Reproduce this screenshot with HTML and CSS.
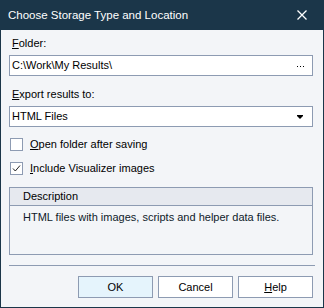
FILE: index.html
```html
<!DOCTYPE html>
<html>
<head>
<meta charset="utf-8">
<link rel="stylesheet" href="styles.css">
</head>
<body>
<div class="window">
  <div class="titlebar">
    <span class="title">Choose Storage Type and Location</span>
    <svg class="close" width="10" height="10" viewBox="0 0 10 10"><path d="M0.5 0.5 L9.5 9.5 M9.5 0.5 L0.5 9.5" stroke="#ffffff" stroke-width="1.3" fill="none"/></svg>
  </div>
  <div class="content">
    <div class="label"><u>F</u>older:</div>
    <div class="field">
      <span class="value">C:\Work\My Results\</span>
      <svg class="dots" width="8" height="2" viewBox="0 0 8 2"><rect x="0" y="0" width="1" height="1" fill="#000"/><rect x="3" y="0" width="1" height="1" fill="#000"/><rect x="6" y="0" width="1" height="1" fill="#000"/></svg>
    </div>
    <div class="label label-gap"><u>E</u>xport results to:</div>
    <div class="field">
      <span class="value">HTML Files</span>
      <svg class="arrow" width="6" height="4" viewBox="0 0 6 4"><path d="M0 0 H6 V1 L3 4 L0 1 Z" fill="#000"/></svg>
    </div>
    <div class="check first">
      <span class="box"></span>
      <span class="ctext"><u>O</u>pen folder after saving</span>
    </div>
    <div class="check">
      <span class="box"><svg width="11" height="11" viewBox="0 0 11 11"><path d="M2 5.5 L4.3 8 L9 2.5" stroke="#222" stroke-width="1" fill="none"/></svg></span>
      <span class="ctext"><u>I</u>nclude Visualizer images</span>
    </div>
    <div class="group">
      <div class="ghead">Description</div>
      <div class="gbody">HTML files with images, scripts and helper data files.</div>
    </div>
    <div class="sep"></div>
    <div class="buttons">
      <div class="btn default">OK</div>
      <div class="btn">Cancel</div>
      <div class="btn"><u>H</u>elp</div>
    </div>
  </div>
</div>
</body>
</html>
```
FILE: styles.css
```css
html, body {
  margin: 0;
  padding: 0;
  background: #f3f5f8;
}
.window {
  width: 324px;
  height: 308px;
  box-sizing: border-box;
  border: 1px solid #1b3649;
  border-top: none;
  background: #f3f5f8;
  font-family: "Liberation Sans", Arial, sans-serif;
  font-size: 11px;
  color: #000;
  display: flex;
  flex-direction: column;
}
.titlebar {
  height: 30px;
  background: #1b3649;
  margin: 0 -1px;
  display: flex;
  align-items: center;
  padding: 0 17px 0 8px;
}
.title {
  color: #ffffff;
  font-size: 11.5px;
  flex: 1;
}
.close {
  display: block;
}
.content {
  padding: 7px 10px 0 8px;
  display: flex;
  flex-direction: column;
}
.label {
  height: 13px;
  line-height: 13px;
  margin-bottom: 5px;
  padding-left: 3px;
}
.label-gap {
  margin-top: 12px;
}
u {
  text-decoration: underline;
  text-underline-offset: 1px;
}
.field {
  height: 21px;
  box-sizing: border-box;
  border: 1px solid #8d9bb2;
  background: #ffffff;
  display: flex;
  align-items: center;
  padding: 0 7px 0 2px;
}
.value {
  flex: 1;
  line-height: 13px;
}
.dots, .arrow {
  display: block;
}
.dots {
  margin-top: 2px;
}
.arrow {
  margin-right: 2px;
}
.check {
  display: flex;
  align-items: center;
  height: 13px;
  margin-top: 11px;
}
.box {
  width: 13px;
  height: 13px;
  box-sizing: border-box;
  border: 1px solid #8d9bb2;
  background: #ffffff;
  margin-left: 1px;
  margin-right: 7px;
  display: flex;
  align-items: center;
  justify-content: center;
}
.box svg {
  display: block;
}
.ctext {
  line-height: 13px;
}
.group {
  margin-top: 12px;
  height: 68px;
  box-sizing: border-box;
  border: 1px solid #8d9bb2;
  display: flex;
  flex-direction: column;
}
.ghead {
  height: 18px;
  box-sizing: border-box;
  border-bottom: 1px solid #8d9bb2;
  background: #e6e9ef;
  padding-left: 13px;
  line-height: 17px;
}
.gbody {
  padding: 5px 0 0 13px;
  line-height: 13px;
  color: #0f1a2a;
}
.sep {
  margin-top: 10px;
  height: 1px;
  background: #8d9bb2;
  margin-right: -2px;
}
.buttons {
  margin-top: 10px;
  display: flex;
  justify-content: flex-end;
  gap: 5px;
}
.btn {
  width: 75px;
  height: 22px;
  box-sizing: border-box;
  border: 1px solid #8d9bb2;
  background: #ffffff;
  display: flex;
  align-items: center;
  justify-content: center;
  line-height: 13px;
}
.btn.default {
  background: #e5f4fc;
}
```
